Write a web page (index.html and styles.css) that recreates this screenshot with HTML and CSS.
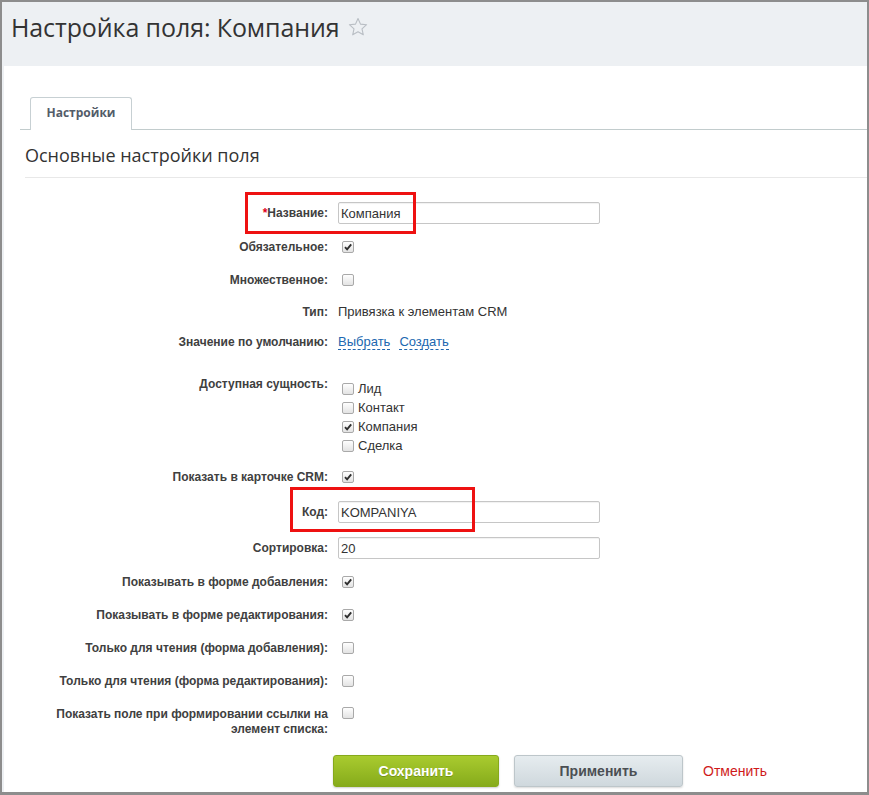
FILE: index.html
```html
<!DOCTYPE html>
<html lang="ru">
<head>
<meta charset="utf-8">
<title>Настройка поля: Компания</title>
<link rel="stylesheet" href="styles.css">
</head>
<body>
<div class="frame">
  <div class="header">
    <h1 class="title">Настройка поля: Компания</h1>
    <svg class="star" width="20" height="20" viewBox="0 0 20 20"><path d="M10 1.5l2.5 5.6 6.1.6-4.6 4.1 1.3 6-5.3-3.1-5.3 3.1 1.3-6-4.6-4.1 6.1-.6z" fill="none" stroke="#b9bec4" stroke-width="1.1" stroke-linejoin="round"/></svg>
  </div>
  <div class="panel">
    <div class="tabs"><div class="tab">Настройки</div></div>
    <h2 class="section-title">Основные настройки поля</h2>
    <div class="form">
      <div class="row h34"><div class="label"><span class="req">*</span>Название:</div><div class="value"><input class="input" type="text" value="Компания"></div></div>
      <div class="row h34"><div class="label">Обязательное:</div><div class="value"><span class="cb checked"><svg viewBox="0 0 10 10"><path d="M2 5.2l2.1 2.2L8.2 2.4" fill="none" stroke="#2e2e2e" stroke-width="1.9"/></svg></span></div></div>
      <div class="row h32"><div class="label">Множественное:</div><div class="value"><span class="cb"></span></div></div>
      <div class="row h32"><div class="label">Тип:</div><div class="value text">Привязка к элементам CRM</div></div>
      <div class="row h28"><div class="label">Значение по умолчанию:</div><div class="value text"><a class="link">Выбрать</a><a class="link">Создать</a></div></div>
      <div class="row multi"><div class="label">Доступная сущность:</div>
        <div class="value options">
          <div class="opt"><span class="cb"></span>Лид</div>
          <div class="opt"><span class="cb"></span>Контакт</div>
          <div class="opt"><span class="cb checked"><svg viewBox="0 0 10 10"><path d="M2 5.2l2.1 2.2L8.2 2.4" fill="none" stroke="#2e2e2e" stroke-width="1.9"/></svg></span>Компания</div>
          <div class="opt"><span class="cb"></span>Сделка</div>
        </div>
      </div>
      <div class="row h34"><div class="label">Показать в карточке CRM:</div><div class="value"><span class="cb checked"><svg viewBox="0 0 10 10"><path d="M2 5.2l2.1 2.2L8.2 2.4" fill="none" stroke="#2e2e2e" stroke-width="1.9"/></svg></span></div></div>
      <div class="row h36"><div class="label">Код:</div><div class="value"><input class="input" type="text" value="KOMPANIYA"></div></div>
      <div class="row h36"><div class="label">Сортировка:</div><div class="value"><input class="input" type="text" value="20"></div></div>
      <div class="row h32"><div class="label">Показывать в форме добавления:</div><div class="value"><span class="cb checked"><svg viewBox="0 0 10 10"><path d="M2 5.2l2.1 2.2L8.2 2.4" fill="none" stroke="#2e2e2e" stroke-width="1.9"/></svg></span></div></div>
      <div class="row h34"><div class="label">Показывать в форме редактирования:</div><div class="value"><span class="cb checked"><svg viewBox="0 0 10 10"><path d="M2 5.2l2.1 2.2L8.2 2.4" fill="none" stroke="#2e2e2e" stroke-width="1.9"/></svg></span></div></div>
      <div class="row h32"><div class="label">Только для чтения (форма добавления):</div><div class="value"><span class="cb"></span></div></div>
      <div class="row h34"><div class="label">Только для чтения (форма редактирования):</div><div class="value"><span class="cb"></span></div></div>
      <div class="row top last"><div class="label">Показать поле при формировании ссылки на элемент списка:</div><div class="value"><span class="cb"></span></div></div>
    </div>
    <div class="buttons">
      <button class="btn btn-save">Сохранить</button>
      <button class="btn btn-apply">Применить</button>
      <a class="cancel">Отменить</a>
    </div>
  </div>
  <div class="mark mark-name"></div>
  <div class="mark mark-code"></div>
</div>
</body>
</html>
```
FILE: styles.css
```css
* { box-sizing: border-box; }
html, body { margin: 0; padding: 0; }
body { font-family: "Liberation Sans", Arial, sans-serif; color: #333; background: #fff; }

.frame {
  position: relative;
  width: 869px;
  height: 795px;
  border-top: 2px solid #8d8d8d;
  border-left: 2px solid #8d8d8d;
  border-right: 2px solid #8d8d8d;
  border-bottom: 3px solid #8d8d8d;
  background: #edf0f3;
  display: flex;
  flex-direction: column;
  overflow: hidden;
}

.header {
  height: 64px;
  flex: none;
  display: flex;
  align-items: flex-start;
  padding: 6px 0 0 9px;
}
.title {
  margin: 0;
  font-family: "Open Sans", sans-serif;
  font-weight: 400;
  font-size: 25px;
  line-height: 38px;
  color: #333;
  letter-spacing: -0.1px;
}
.star { margin: 9px 0 0 8px; }

.panel {
  flex: 1;
  background: #fff;
  margin-left: 2px;
  display: flex;
  flex-direction: column;
}

.tabs {
  margin: 31px 0 0 16px;
  border-bottom: 1px solid #c2cccd;
  height: 33px;
  display: flex;
}
.tab {
  margin-left: 10px;
  width: 102px;
  height: 33px;
  border: 1px solid #c7d0d3;
  border-bottom: none;
  border-radius: 3px 3px 0 0;
  background: #fff;
  font-family: "Open Sans", sans-serif;
  font-weight: 700;
  font-size: 12px;
  color: #535c69;
  text-align: center;
  line-height: 30px;
}

.section-title {
  margin: 0 0 0 21px;
  padding: 12px 0 9px 0;
  font-family: "Open Sans", sans-serif;
  font-weight: 400;
  font-size: 18px;
  line-height: 26px;
  color: #333;
  border-bottom: 1px solid #e8e8e8;
}

.form { padding-top: 18px; }
.row {
  display: grid;
  grid-template-columns: 324px 1fr;
  column-gap: 10px;
  align-items: center;
}
.h28 { height: 28px; }
.h32 { height: 32px; }
.h34 { height: 34px; }
.h36 { height: 36px; }
.row.multi { height: 104px; align-items: start; padding-top: 21px; }
.row.multi .options { padding-top: 2px; }
.row.top { align-items: start; padding-top: 9px; height: 47px; }

.label {
  text-align: right;
  font-weight: 700;
  font-size: 12px;
  line-height: 15px;
  color: #404040;
  padding-left: 24px;
}
.req { color: #e1001a; }
.value { display: flex; align-items: center; }
.text { font-size: 13px; line-height: 16px; color: #333; }

.input {
  width: 262px;
  height: 22px;
  border: 1px solid #c6c6c6;
  border-radius: 2px;
  box-shadow: inset 0 1px 1px rgba(0,0,0,0.06);
  font-family: "Liberation Sans", Arial, sans-serif;
  font-size: 13px;
  color: #333;
  padding: 0 2px;
  margin: 0;
  outline: none;
}

.cb {
  width: 12px;
  height: 12px;
  margin-left: 4px;
  border: 1px solid #a9a9a9;
  border-radius: 2px;
  background: linear-gradient(#fefefe, #e3e3e3);
  display: inline-flex;
  align-items: center;
  justify-content: center;
  flex: none;
}
.cb svg { width: 10px; height: 10px; display: block; }

.link {
  color: #2067b0;
  border-bottom: 1px dashed #2067b0;
  line-height: 14px;
  margin-right: 9px;
  cursor: pointer;
}

.options { flex-direction: column; align-items: flex-start; }
.opt {
  display: flex;
  align-items: center;
  height: 19px;
  font-size: 13px;
  color: #333;
}
.opt .cb { margin-right: 4px; }

.buttons {
  display: flex;
  align-items: center;
  padding: 10px 0 0 329px;
}
.btn {
  height: 32px;
  border-radius: 3px;
  font-family: "Liberation Sans", Arial, sans-serif;
  font-weight: 700;
  font-size: 14px;
  cursor: pointer;
  padding: 0;
}
.btn-save {
  width: 166px;
  border: 1px solid #86a91c;
  background: linear-gradient(#a9cb2f, #86ab1b);
  color: #fff;
  text-shadow: 0 1px 0 rgba(60,80,0,0.35);
  box-shadow: 0 1px 2px rgba(0,0,0,0.2);
}
.btn-apply {
  width: 169px;
  margin-left: 15px;
  border: 1px solid #bdc6ca;
  background: linear-gradient(#e6ecef, #cfd8dd);
  color: #4b4f53;
  box-shadow: 0 1px 2px rgba(0,0,0,0.15);
}
.cancel {
  margin-left: 20px;
  font-size: 14px;
  color: #cf1b1b;
  cursor: pointer;
}

.mark {
  position: absolute;
  border: 3px solid #ee1111;
  pointer-events: none;
}
.mark-name { left: 243px; top: 190px; width: 171px; height: 42px; }
.mark-code { left: 288px; top: 485px; width: 185px; height: 45px; }
```
